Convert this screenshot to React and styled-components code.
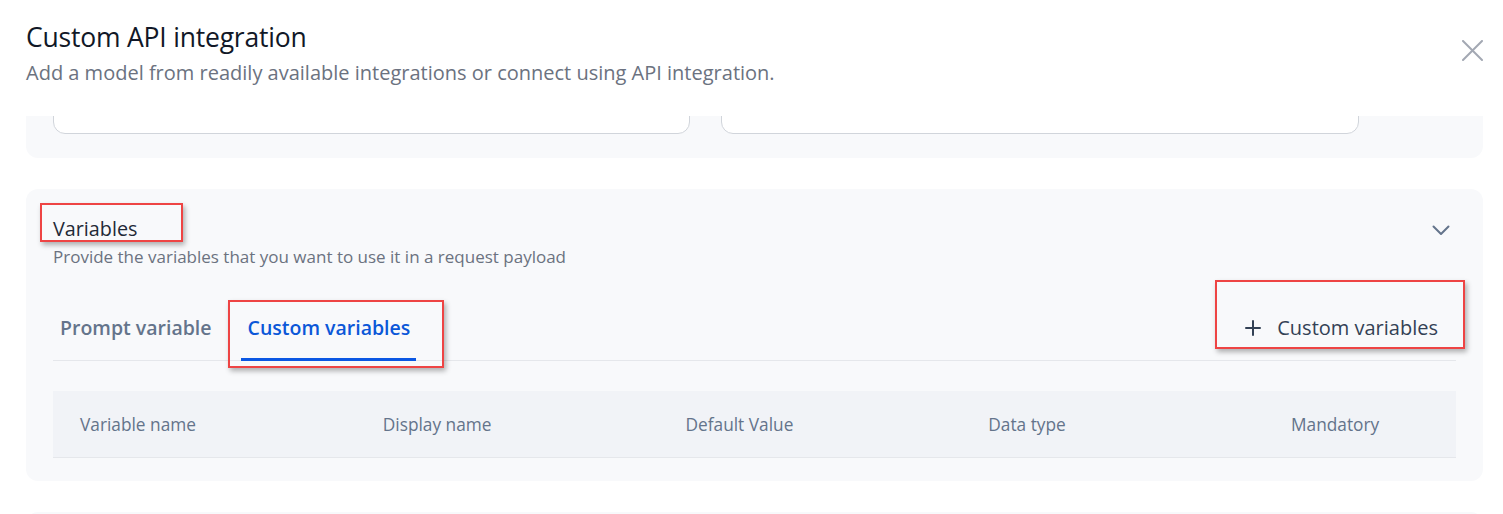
import React from "react";
import styled, { createGlobalStyle } from "styled-components";

const Global = createGlobalStyle`
  html, body { margin: 0; padding: 0; background: #ffffff; overflow: hidden; }
  body { font-family: "Open Sans", "Noto Sans", sans-serif; }
  * { box-sizing: border-box; }
`;

const Modal = styled.div`
  width: 1503px;
  height: 514px;
  background: #fff;
  display: flex;
  flex-direction: column;
  overflow: hidden;
`;

const Header = styled.header`
  display: flex;
  justify-content: space-between;
  align-items: flex-start;
  padding: 20px 20px 0 26px;
  height: 116px;
  flex-shrink: 0;
`;

const Titles = styled.div`
  display: flex;
  flex-direction: column;
`;

const Title = styled.h1`
  margin: 0;
  font-size: 26.5px;
  line-height: 34px;
  font-weight: 500;
  color: #111827;
  letter-spacing: -0.2px;
`;

const Subtitle = styled.p`
  margin: 5px 0 0;
  font-size: 20px;
  line-height: 28px;
  color: #6b7280;
`;

const CloseButton = styled.button`
  border: 0;
  background: none;
  padding: 0;
  margin-top: 20px;
  width: 21px;
  height: 21px;
  cursor: pointer;
  display: flex;
`;

const ScrollArea = styled.div`
  flex: 1;
  overflow: hidden;
  padding: 0 20px 0 26px;
`;

const ScrollContent = styled.div`
  display: flex;
  flex-direction: column;
  gap: 31px;
  margin-top: ${(p) => -p.$offset}px;
`;

const Panel = styled.section`
  position: relative;
  background: #f8f9fb;
  border-radius: 12px;
  padding: ${(p) => p.$pad || "27px 27px 23px"};
`;

const InputRow = styled.div`
  display: grid;
  grid-template-columns: 637px 638px;
  column-gap: 31px;
`;

const Input = styled.div`
  height: 48px;
  background: #fff;
  border: 1px solid #d1d5db;
  border-radius: 12px;
`;

const SectionHead = styled.div`
  display: flex;
  justify-content: space-between;
  align-items: flex-start;
`;

const SectionTitle = styled.h2`
  margin: 0;
  font-size: 19.8px;
  line-height: 26px;
  font-weight: 500;
  color: #1f2937;
`;

const SectionDesc = styled.p`
  margin: 3px 0 0;
  font-size: 17px;
  line-height: 24px;
  color: #6b7280;
`;

const ChevronButton = styled.button`
  border: 0;
  background: none;
  padding: 0;
  margin: 9px 6px 0 0;
  display: flex;
`;

const TabBar = styled.div`
  margin-top: 30px;
  display: flex;
  justify-content: space-between;
  align-items: flex-end;
  border-bottom: 1px solid #e5e7eb;
`;

const Tabs = styled.div`
  display: flex;
  gap: 23px;
`;

const Tab = styled.button`
  border: 0;
  background: none;
  font-family: inherit;
  font-size: 19.5px;
  line-height: 28px;
  font-weight: 600;
  padding: 15px 6px 16px 7px;
  margin-bottom: -1px;
  color: ${(p) => (p.$active ? "#0b57d8" : "#64748b")};
  border-bottom: 3px solid ${(p) => (p.$active ? "#0b57e3" : "transparent")};
  cursor: pointer;
`;

const AddButton = styled.button`
  border: 0;
  background: none;
  font-family: inherit;
  font-size: 20px;
  line-height: 28px;
  font-weight: 500;
  color: #334155;
  display: flex;
  align-items: center;
  gap: 16px;
  padding: 0 18px 18px 0;
  cursor: pointer;
`;

const Table = styled.div`
  margin-top: 30px;
`;

const HeadRow = styled.div`
  display: grid;
  grid-template-columns: repeat(4, 302.75px) 1fr;
  align-items: center;
  height: 67px;
  padding: 0 27px;
  background: #f1f3f7;
  border-bottom: 1px solid #e5e7eb;
`;

const HeadCell = styled.div`
  font-size: 17.3px;
  font-weight: 500;
  color: #64748b;
  white-space: nowrap;
`;

const Annotation = styled.div`
  position: absolute;
  left: ${(p) => p.$x}px;
  top: ${(p) => p.$y}px;
  width: ${(p) => p.$w}px;
  height: ${(p) => p.$h}px;
  border: 2.5px solid #ee4444;
  box-shadow: 2px 3px 5px rgba(0, 0, 0, 0.3);
  pointer-events: none;
`;

const XIcon = () => (
  <svg width="21" height="21" viewBox="0 0 21 21" fill="none">
    <path d="M1 1L20 20M20 1L1 20" stroke="#a3a8b3" strokeWidth="2" strokeLinecap="round" />
  </svg>
);

const ChevronIcon = () => (
  <svg width="18" height="11" viewBox="0 0 18 11" fill="none">
    <path d="M1.5 1.5L9 9L16.5 1.5" stroke="#64748b" strokeWidth="2" strokeLinecap="round" strokeLinejoin="round" />
  </svg>
);

const PlusIcon = () => (
  <svg width="16" height="16" viewBox="0 0 16 16" fill="none">
    <path d="M8 1V15M1 8H15" stroke="#334155" strokeWidth="2" strokeLinecap="round" />
  </svg>
);

const columns = ["Variable name", "Display name", "Default Value", "Data type", "Mandatory"];

export default function App() {
  return (
    <>
      <Global />
      <Modal>
        <Header>
          <Titles>
            <Title>Custom API integration</Title>
            <Subtitle>Add a model from readily available integrations or connect using API integration.</Subtitle>
          </Titles>
          <CloseButton aria-label="Close">
            <XIcon />
          </CloseButton>
        </Header>
        <ScrollArea>
          <ScrollContent $offset={54}>
            <Panel $pad="24px 27px">
              <InputRow>
                <Input />
                <Input />
              </InputRow>
            </Panel>
            <Panel>
              <SectionHead>
                <div>
                  <SectionTitle>Variables</SectionTitle>
                  <SectionDesc>Provide the variables that you want to use it in a request payload</SectionDesc>
                </div>
                <ChevronButton aria-label="Collapse">
                  <ChevronIcon />
                </ChevronButton>
              </SectionHead>
              <TabBar>
                <Tabs>
                  <Tab>Prompt variable</Tab>
                  <Tab $active>Custom variables</Tab>
                </Tabs>
                <AddButton>
                  <PlusIcon />
                  Custom variables
                </AddButton>
              </TabBar>
              <Table>
                <HeadRow>
                  {columns.map((c) => (
                    <HeadCell key={c}>{c}</HeadCell>
                  ))}
                </HeadRow>
              </Table>
              <Annotation $x={14} $y={14} $w={143} $h={39} />
              <Annotation $x={202} $y={111} $w={216} $h={68} />
              <Annotation $x={1189} $y={91} $w={250} $h={69} />
            </Panel>
            <Panel $pad="40px 27px" />
          </ScrollContent>
        </ScrollArea>
      </Modal>
    </>
  );
}
